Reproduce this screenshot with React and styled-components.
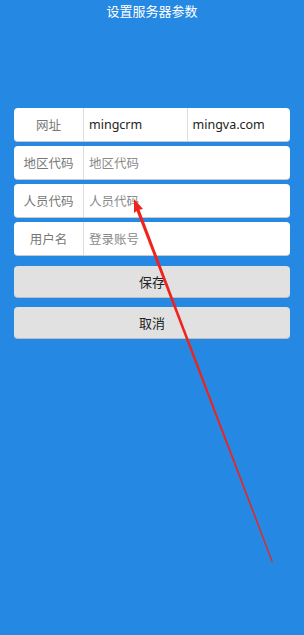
import React from "react";
import styled, { createGlobalStyle } from "styled-components";

const Global = createGlobalStyle`
  html, body { margin: 0; padding: 0; background: #2589e3; }
  body { font-family: "Noto Sans CJK SC", "Noto Sans", sans-serif; }
`;

const Page = styled.div`
  position: relative;
  width: 304px;
  height: 635px;
  background: #2589e3;
  overflow: hidden;
`;

const Title = styled.div`
  height: 22px;
  line-height: 22px;
  text-align: center;
  color: #fff;
  font-size: 13px;
`;

const Form = styled.div`
  display: flex;
  flex-direction: column;
  gap: 4px;
  padding: 86px 14px 0 14px;
`;

const Row = styled.div`
  display: flex;
  height: 34px;
  background: #fff;
  border-radius: 4px;
  border-bottom: 1px solid #c9c9c9;
  box-sizing: border-box;
  overflow: hidden;
`;

const Label = styled.div`
  width: 69px;
  flex: none;
  display: flex;
  align-items: center;
  justify-content: center;
  color: #777;
  font-size: 12.5px;
  border-right: 1px solid #ddd;
`;

const Field = styled.div`
  flex: ${(p) => p.$flex || 1};
  display: flex;
  align-items: center;
  padding-left: 5px;
  font-size: 12.5px;
  color: ${(p) => (p.$value ? "#222" : "#8a8a8a")};
  border-left: ${(p) => (p.$divider ? "1px solid #ddd" : "none")};
  font-family: ${(p) => (p.$value ? '"Noto Sans", sans-serif' : 'inherit')};
`;

const Buttons = styled.div`
  display: flex;
  flex-direction: column;
  gap: 9px;
  margin-top: 6px;
`;

const Button = styled.div`
  height: 32px;
  display: flex;
  align-items: center;
  justify-content: center;
  background: #e1e1e1;
  border-radius: 4px;
  border-bottom: 1px solid #bdbdbd;
  box-sizing: border-box;
  color: #222;
  font-size: 13px;
`;

const Overlay = styled.svg`
  position: absolute;
  left: 0;
  top: 0;
  pointer-events: none;
`;

export default function App() {
  return (
    <Page>
      <Global />
      <Title>设置服务器参数</Title>
      <Form>
        <Row>
          <Label>网址</Label>
          <Field $value $flex={103}>mingcrm</Field>
          <Field $value $divider $flex={103}>mingva.com</Field>
        </Row>
        <Row>
          <Label>地区代码</Label>
          <Field>地区代码</Field>
        </Row>
        <Row>
          <Label>人员代码</Label>
          <Field>人员代码</Field>
        </Row>
        <Row>
          <Label>用户名</Label>
          <Field>登录账号</Field>
        </Row>
        <Buttons>
          <Button>保存</Button>
          <Button>取消</Button>
        </Buttons>
      </Form>
      <Overlay width="304" height="635" viewBox="0 0 304 635">
        <polygon points="273,562 271.9,562.4 135.8,209 138.8,207.8" fill="#f0221c" />
        <polygon points="134,199 143,209 138,210 134,213" fill="#f0221c" />
      </Overlay>
    </Page>
  );
}
